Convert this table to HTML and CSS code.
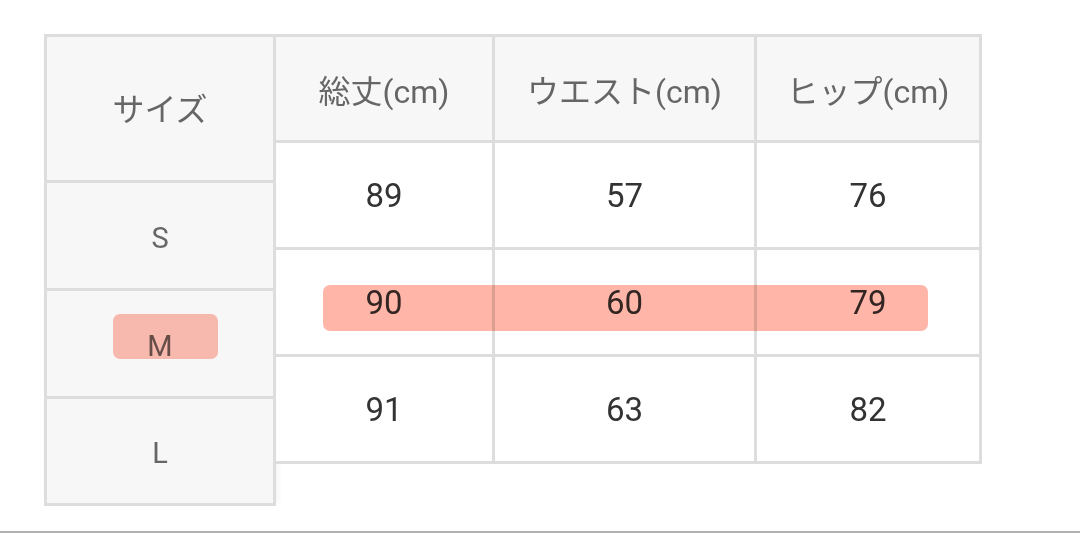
FILE: index.html
```html
<!DOCTYPE html>
<html lang="ja">
<head>
<meta charset="utf-8">
<title>サイズ表</title>
<link rel="stylesheet" href="styles.css">
</head>
<body>
<main class="page">
  <div class="chart">
    <div class="labels">
      <div class="cell head">サイズ</div>
      <div class="cell size">S</div>
      <div class="cell size">M</div>
      <div class="cell size">L</div>
    </div>
    <div class="sizes">
      <div class="cell head">総丈(cm)</div>
      <div class="cell head">ウエスト(cm)</div>
      <div class="cell head">ヒップ(cm)</div>
      <div class="cell num">89</div>
      <div class="cell num">57</div>
      <div class="cell num">76</div>
      <div class="cell num">90</div>
      <div class="cell num">60</div>
      <div class="cell num">79</div>
      <div class="cell num">91</div>
      <div class="cell num">63</div>
      <div class="cell num">82</div>
    </div>
    <div class="hl hl-m"></div>
    <div class="hl hl-row"></div>
  </div>
</main>
<div class="rule"></div>
</body>
</html>
```
FILE: styles.css
```css
* { box-sizing: border-box; }
html, body {
  margin: 0;
  padding: 0;
  background: #fff;
}
body {
  width: 1080px;
  height: 533px;
  overflow: hidden;
  display: flex;
  flex-direction: column;
  font-family: "Roboto", "Noto Sans CJK JP", sans-serif;
}
.page {
  flex: 1;
  padding: 34px 0 0 44px;
}
.chart {
  position: relative;
  display: flex;
  align-items: flex-start;
}
.labels {
  display: grid;
  width: 232px;
  grid-template-rows: 143px 105px 105px 104px;
  gap: 3px;
  padding: 3px;
  background: #dddddd;
  box-shadow: 5px 0 6px -3px rgba(0, 0, 0, 0.05);
}
.sizes {
  display: grid;
  grid-template-columns: 216px 259px 222px;
  grid-template-rows: 103px 104px 104px 104px;
  gap: 3px;
  padding: 3px 3px 3px 0;
  background: #dddddd;
}
.cell {
  display: flex;
  align-items: center;
  justify-content: center;
  background: #fff;
}
.labels .cell { background: #f7f7f7; }
.head {
  background: #f7f7f7;
  color: #666;
  font-size: 32px;
}
.labels .head { padding-bottom: 4px; }
.size {
  color: #666;
  font-size: 29px;
  padding-top: 4px;
}
.num {
  color: #333;
  font-size: 33px;
}
.hl {
  position: absolute;
  background: #ffb6a9;
  mix-blend-mode: multiply;
  border-radius: 7px;
  filter: blur(0.6px);
}
.hl-m {
  left: 69px;
  top: 280px;
  width: 105px;
  height: 45px;
  background: #ffbfb4;
}
.hl-row {
  left: 279px;
  top: 251px;
  width: 605px;
  height: 46px;
}
.rule {
  height: 2px;
  background: #b0b0b0;
}
```
